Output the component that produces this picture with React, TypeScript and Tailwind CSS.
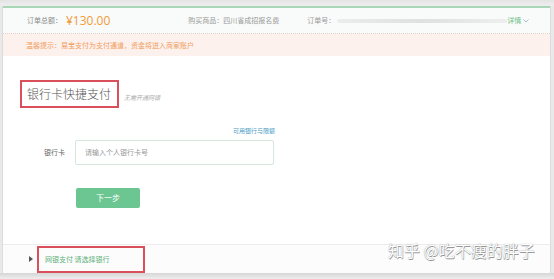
import React from "react";

export default function App() {
  const cjk = { fontFamily: '"Noto Sans CJK SC", "Noto Sans", sans-serif' };
  return (
    <div className="w-[554px] h-[279px] bg-[#e9e9e9] flex flex-col overflow-hidden relative whitespace-nowrap" style={cjk}>
      <div className="h-[6px] bg-gradient-to-b from-[#e4e4e4] to-[#eeeeee]" />
      <div className="flex-1 flex flex-col ml-[2px] mr-[3px] bg-white border-l border-r border-[#dcdcdc]">
        <div className="h-[2px] bg-[#a8d6b6]" />
        {/* header */}
        <div className="h-[26px] bg-[#f8fbf9] flex items-center pl-[24px] pr-[22px] border-b border-dotted border-[#e6cfc9]">
          <span className="shrink-0 text-[7px] text-[#8c8c8c]">订单总额：</span>
          <span className="shrink-0 text-[12px] text-[#f29a3a] ml-[4px] leading-none" style={{ fontFamily: '"Open Sans", "Noto Sans", sans-serif' }}>¥130.00</span>
          <span className="shrink-0 text-[7px] text-[#9a9a9a] ml-[78px]">购买商品：四川省成招报名费</span>
          <span className="shrink-0 text-[7px] text-[#9a9a9a] ml-[28px]">订单号：</span>
          <span className="shrink-0 ml-[2px] h-[4px] w-[170px] rounded bg-gradient-to-r from-[#ececec] via-[#e0e0e0] to-[#eeeeee]" />
          <span className="shrink-0 ml-auto text-[7px] text-[#6fbf8a] flex items-center gap-[2px]">
            详情
            <svg width="6" height="4" viewBox="0 0 6 4"><path d="M0.5 0.5 L3 3 L5.5 0.5" fill="none" stroke="#9ab" strokeWidth="0.8" /></svg>
          </span>
        </div>
        {/* notice */}
        <div className="h-[22px] bg-[#fdf1ee] flex items-center pl-[23px]">
          <span className="text-[7px] text-[#f0a060]">温馨提示：易宝支付为支付通道，资金将进入商家账户</span>
        </div>
        {/* main */}
        <div className="flex-1 flex flex-col">
          <div className="flex items-end mt-[24px] ml-[17px]">
            <div className="w-[99px] h-[28px] border-2 border-[#d9505a] flex items-center pl-[5px]">
              <span className="text-[12px] font-light text-[#555] leading-none">银行卡快捷支付</span>
            </div>
            <span className="text-[6px] italic text-[#aaa] ml-[5px] mb-[6px]">无需开通网银</span>
          </div>
          <div className="w-[272px] flex justify-end mt-[18px]">
            <span className="text-[6px] text-[#4b9bc4]">可用银行与限额</span>
          </div>
          <div className="flex items-center mt-[5px]">
            <span className="w-[72px] text-right text-[7px] text-[#666] pr-[10px]">银行卡</span>
            <div className="w-[199px] h-[25px] border border-[#d6e8dc] rounded-[2px] flex items-center pl-[9px]">
              <span className="text-[7px] text-[#999]">请输入个人银行卡号</span>
            </div>
          </div>
          <div className="ml-[73px] mt-[23px] w-[64px] h-[20px] bg-[#6cc691] rounded-[2px] flex items-center justify-center">
            <span className="text-[8px] text-white">下一步</span>
          </div>
          <div className="flex-1" />
          <div className="h-[29px] border-t border-[#ececec] bg-[#fcfcfc] flex items-center">
            <svg className="ml-[26px]" width="4" height="6" viewBox="0 0 4 6"><path d="M0 0 L4 3 L0 6 Z" fill="#555" /></svg>
            <div className="ml-[4px] w-[108px] h-[27px] border-2 border-[#d9505a] flex items-center pl-[6px]">
              <span className="text-[7px] text-[#5cb07b]">网银支付 请选择银行</span>
            </div>
          </div>
        </div>
      </div>
      <div className="h-[6px] bg-gradient-to-b from-[#d6d6d6] to-[#eeeeee]" />
      <div
        className="absolute left-[388px] top-[242px] text-[16px] text-white leading-none"
        style={{ ...cjk, textShadow: "0 0 1px #8a8a8a, 0.5px 0.5px 0.5px #999" }}
      >
        知乎 @吃不瘦的胖子
      </div>
    </div>
  );
}
